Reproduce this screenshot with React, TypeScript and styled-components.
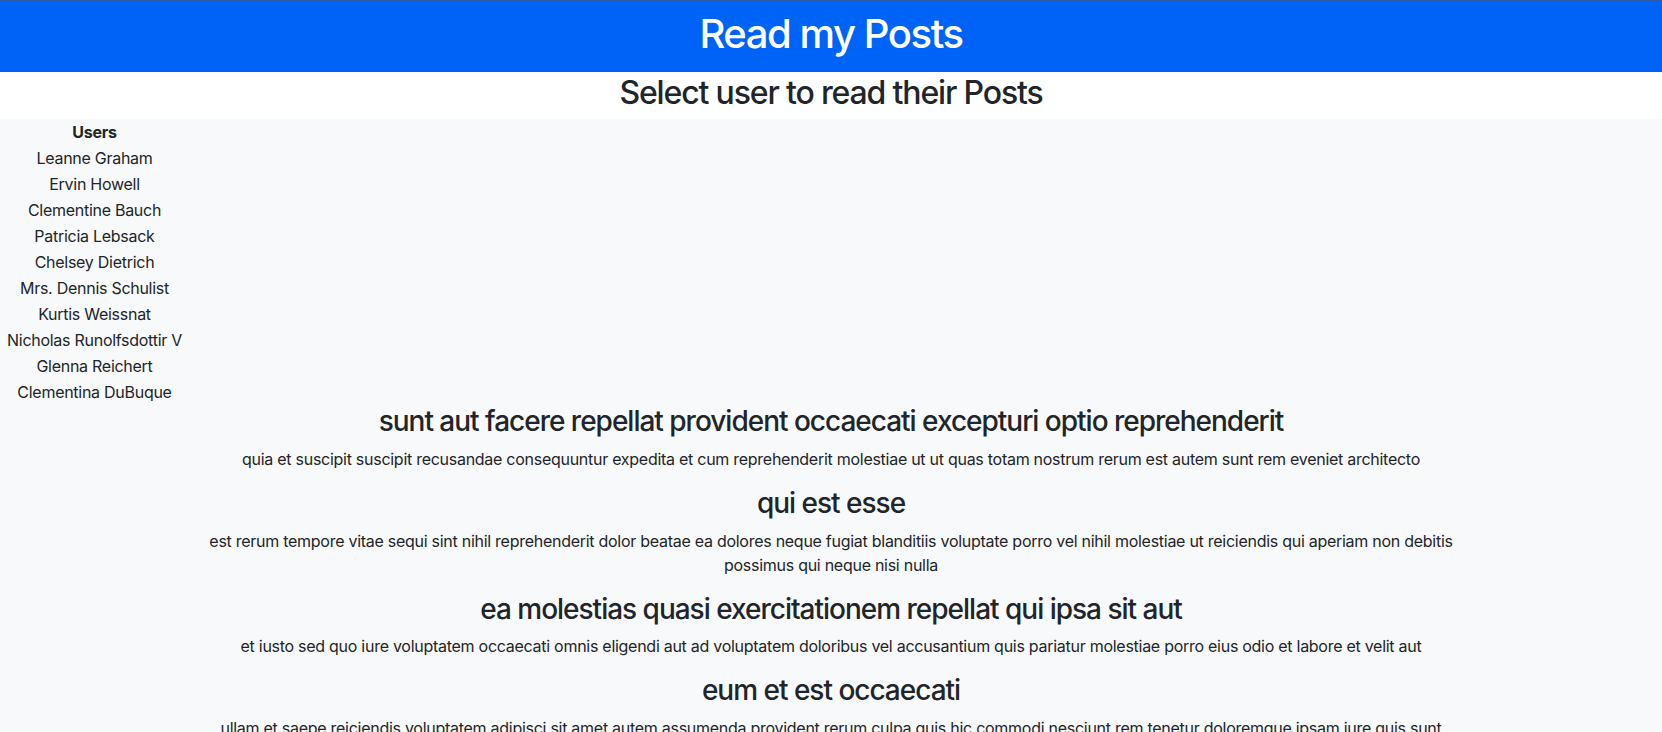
import React from "react";
import styled, { createGlobalStyle } from "styled-components";

const GlobalStyle = createGlobalStyle`
  *, *::before, *::after { box-sizing: border-box; }
  html, body { margin: 0; padding: 0; }
  body {
    font-family: Inter, "Noto Sans", "Liberation Sans", sans-serif;
    font-size: 16px;
    line-height: 1.5;
    letter-spacing: -0.017em;
    color: #212529;
    background: #f8f9fa;
  }
`;

const Header = styled.header`
  background: #0063f7;
  border-top: 2px solid #2c5ba8;
  padding: 8px 0 6px;
  text-align: center;
`;

const Title = styled.h1`
  margin: 0 0 8px;
  font-size: 40px;
  font-weight: 500;
  line-height: 1.2;
  letter-spacing: -0.036em;
  color: #ffffff;
`;

const SubBar = styled.div`
  background: #ffffff;
  text-align: center;
`;

const Subtitle = styled.h2`
  margin: 0;
  padding: 2px 0 7px;
  font-size: 32px;
  font-weight: 500;
  line-height: 1.2;
  letter-spacing: -0.036em;
`;

const Main = styled.main`
  background: #f8f9fa;
  min-height: calc(100vh - 119px);
`;

const UsersTable = styled.table`
  border-collapse: collapse;
  margin-left: 6px;
  text-align: center;
`;

const HeadCell = styled.th`
  padding: 1px;
  font-weight: 700;
  line-height: 24px;
`;

const UserCell = styled.td`
  padding: 1px;
  line-height: 24px;
  cursor: pointer;
`;

const Posts = styled.section`
  max-width: 1320px;
  margin: 0 auto;
  padding: 0 12px;
  text-align: center;
`;

const PostTitle = styled.h3`
  margin: 0 0 8px;
  font-size: 28px;
  font-weight: 500;
  line-height: 1.2;
  letter-spacing: -0.036em;
`;

const PostBody = styled.p`
  margin: 0 0 16px;
`;

const users = [
  "Leanne Graham",
  "Ervin Howell",
  "Clementine Bauch",
  "Patricia Lebsack",
  "Chelsey Dietrich",
  "Mrs. Dennis Schulist",
  "Kurtis Weissnat",
  "Nicholas Runolfsdottir V",
  "Glenna Reichert",
  "Clementina DuBuque",
];

const posts = [
  {
    title: "sunt aut facere repellat provident occaecati excepturi optio reprehenderit",
    body: "quia et suscipit suscipit recusandae consequuntur expedita et cum reprehenderit molestiae ut ut quas totam nostrum rerum est autem sunt rem eveniet architecto",
  },
  {
    title: "qui est esse",
    body: "est rerum tempore vitae sequi sint nihil reprehenderit dolor beatae ea dolores neque fugiat blanditiis voluptate porro vel nihil molestiae ut reiciendis qui aperiam non debitis possimus qui neque nisi nulla",
  },
  {
    title: "ea molestias quasi exercitationem repellat qui ipsa sit aut",
    body: "et iusto sed quo iure voluptatem occaecati omnis eligendi aut ad voluptatem doloribus vel accusantium quis pariatur molestiae porro eius odio et labore et velit aut",
  },
  {
    title: "eum et est occaecati",
    body: "ullam et saepe reiciendis voluptatem adipisci sit amet autem assumenda provident rerum culpa quis hic commodi nesciunt rem tenetur doloremque ipsam iure quis sunt voluptatem rerum illo velit",
  },
  {
    title: "nesciunt quas odio",
    body: "repudiandae veniam quaerat sunt sed alias aut fugiat sit autem sed est voluptatem omnis possimus esse voluptatibus quis est aut tenetur dolor neque",
  },
];

export default function App() {
  return (
    <>
      <GlobalStyle />
      <Header>
        <Title>Read my Posts</Title>
      </Header>
      <SubBar>
        <Subtitle>Select user to read their Posts</Subtitle>
      </SubBar>
      <Main>
        <UsersTable>
          <thead>
            <tr>
              <HeadCell>Users</HeadCell>
            </tr>
          </thead>
          <tbody>
            {users.map((u) => (
              <tr key={u}>
                <UserCell>{u}</UserCell>
              </tr>
            ))}
          </tbody>
        </UsersTable>
        <Posts>
          {posts.map((p) => (
            <article key={p.title}>
              <PostTitle>{p.title}</PostTitle>
              <PostBody>{p.body}</PostBody>
            </article>
          ))}
        </Posts>
      </Main>
    </>
  );
}
